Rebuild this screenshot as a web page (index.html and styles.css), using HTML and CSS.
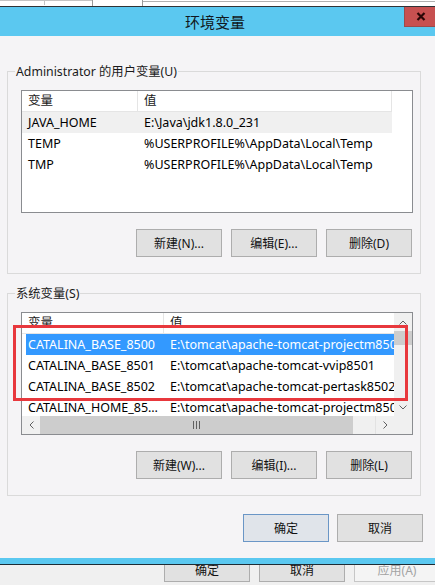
FILE: index.html
```html
<!DOCTYPE html>
<html lang="zh-CN">
<head>
<meta charset="utf-8">
<title>环境变量</title>
<link rel="stylesheet" href="styles.css">
</head>
<body>
<div class="top-strip">
  <div class="ts-a"><span class="ts-tick"></span></div>
  <div class="ts-tab"></div>
  <div class="ts-b"></div>
</div>
<div class="dialog">
  <div class="titlebar">
    <div class="title">环境变量</div>
    <div class="close">
      <svg width="10" height="9" viewBox="0 0 10 9"><path d="M1.5 1 L8.5 8 M8.5 1 L1.5 8" stroke="#2a0606" stroke-width="2.2" fill="none"/></svg>
    </div>
  </div>
  <div class="content">
    <div class="group">
      <div class="group-label">Administrator 的用户变量(U)</div>
      <div class="list user">
        <div class="lv-head">
          <div class="c1">变量</div>
          <div class="c2">值</div>
        </div>
        <div class="row inactive"><div class="c1">JAVA_HOME</div><div class="c2">E:\Java\jdk1.8.0_231</div></div>
        <div class="row"><div class="c1">TEMP</div><div class="c2">%USERPROFILE%\AppData\Local\Temp</div></div>
        <div class="row"><div class="c1">TMP</div><div class="c2">%USERPROFILE%\AppData\Local\Temp</div></div>
      </div>
      <div class="btns">
        <button class="btn">新建(N)...</button>
        <button class="btn">编辑(E)...</button>
        <button class="btn">删除(D)</button>
      </div>
    </div>
    <div class="group">
      <div class="group-label">系统变量(S)</div>
      <div class="list sys">
        <div class="sys-body">
          <div class="lv-head">
            <div class="c1">变量</div>
            <div class="c2">值</div>
          </div>
          <div class="row sel"><div class="c1">CATALINA_BASE_8500</div><div class="c2">E:\tomcat\apache-tomcat-projectm8500</div></div>
          <div class="row"><div class="c1">CATALINA_BASE_8501</div><div class="c2">E:\tomcat\apache-tomcat-vvip8501</div></div>
          <div class="row"><div class="c1">CATALINA_BASE_8502</div><div class="c2">E:\tomcat\apache-tomcat-pertask8502</div></div>
          <div class="row"><div class="c1">CATALINA_HOME_8500</div><div class="c2">E:\tomcat\apache-tomcat-projectm8500</div></div>
        </div>
        <div class="vscroll">
          <div class="arrow"><svg width="8" height="5" viewBox="0 0 8 5"><path d="M0.5 4.5 L4 1 L7.5 4.5" stroke="#606060" fill="none"/></svg></div>
          <div class="vthumb"></div>
          <div class="track"></div>
          <div class="arrow"><svg width="8" height="5" viewBox="0 0 8 5"><path d="M0.5 0.5 L4 4 L7.5 0.5" stroke="#606060" fill="none"/></svg></div>
        </div>
        <div class="hscroll">
          <div class="harrow"><svg width="5" height="8" viewBox="0 0 5 8"><path d="M4.5 0.5 L1 4 L4.5 7.5" stroke="#606060" fill="none"/></svg></div>
          <div class="hthumb"><svg width="7" height="8" viewBox="0 0 7 8"><path d="M0.5 0 V8 M3.5 0 V8 M6.5 0 V8" stroke="#606060" fill="none"/></svg></div>
          <div class="htrack"></div>
          <div class="harrow"><svg width="5" height="8" viewBox="0 0 5 8"><path d="M0.5 0.5 L4 4 L0.5 7.5" stroke="#606060" fill="none"/></svg></div>
        </div>
        <div class="corner"></div>
        <div class="highlight"></div>
      </div>
      <div class="btns">
        <button class="btn">新建(W)...</button>
        <button class="btn">编辑(I)...</button>
        <button class="btn">删除(L)</button>
      </div>
    </div>
    <div class="dlg-btns">
      <button class="btn default">确定</button>
      <button class="btn">取消</button>
    </div>
  </div>
  <div class="frame-bottom"></div>
</div>
<div class="behind-bottom">
  <button class="btn behind">确定</button>
  <button class="btn behind">取消</button>
  <button class="btn behind disabled">应用(A)</button>
</div>
</body>
</html>
```

FILE: styles.css
```css
html, body {
  margin: 0;
  padding: 0;
}
body {
  width: 435px;
  height: 585px;
  overflow: hidden;
  background: #f0f0f0;
  font-family: "Noto Sans", "Noto Sans CJK SC", sans-serif;
  font-size: 12px;
  color: #000;
}

/* window behind, top */
.top-strip {
  height: 6px;
  background: #fff;
  border-bottom: 1px solid #2f3336;
  display: flex;
}
.ts-a {
  flex: 0 0 92px;
  border-top: 1px solid #c4c4c4;
}
.ts-tick {
  display: block;
  width: 1px;
  height: 4px;
  margin-left: 44px;
  background: #c4c4c4;
}
.ts-tab {
  flex: 0 0 49px;
  border-left: 1px solid #9a9a9a;
  border-right: 1px solid #9a9a9a;
}
.ts-b {
  flex: 1;
  margin-top: 1px;
  border-top: 1px solid #b0b0b0;
}

/* title bar */
.titlebar {
  height: 29px;
  background: #5bc8f0;
  display: flex;
  align-items: flex-start;
}
.title {
  flex: 1;
  padding-left: 26px;
  text-align: center;
  font-family: "Noto Sans CJK SC", sans-serif;
  font-size: 15px;
  line-height: 29px;
  color: #101820;
}
.close {
  width: 31px;
  height: 20px;
  box-sizing: border-box;
  background: #c75050;
  border-left: 1px solid #9c4a4a;
  border-bottom: 1px solid #9c4a4a;
  display: flex;
  align-items: center;
  padding-left: 11px;
}
.close svg {
  display: block;
}

/* content */
.content {
  background: #f5f4f6;
  padding: 35px 14px 16px 7px;
}
.group {
  border: 1px solid #dadada;
  padding: 0 7px 16px 13px;
}
.group + .group {
  margin-top: 19px;
}
.group-label {
  display: table;
  margin: -8px 0 0 -6px;
  padding: 0 1px;
  line-height: 16px;
  font-size: 12.3px;
  background: #f5f4f6;
  color: #1a1a1a;
}

.list {
  margin-top: 10px;
  height: 123px;
  box-sizing: border-box;
  border: 1px solid #8a8c90;
  background: #fff;
  position: relative;
  font-size: 12.5px;
}

.lv-head {
  display: flex;
  height: 21px;
}
.lv-head .c1,
.lv-head .c2 {
  box-sizing: border-box;
  border-right: 1px solid #e5e5e5;
  border-bottom: 1px solid #e5e5e5;
  line-height: 20px;
  color: #1a1a1a;
}
.row {
  display: flex;
  height: 21px;
  line-height: 21px;
  white-space: nowrap;
}
.c1, .c2 {
  box-sizing: border-box;
  padding-left: 6px;
  white-space: nowrap;
  overflow: hidden;
  flex: none;
}
.c1 {
  text-overflow: ellipsis;
  padding-right: 4px;
}

/* user list */
.user .c1 { width: 116px; }
.user .c2 { width: 254px; }
.user .row.inactive {
  width: 370px;
  background: #f0f0f0;
}

/* system list */
.sys {
  display: grid;
  grid-template-columns: 1fr 18px;
  grid-template-rows: 1fr 18px;
}
.sys-body {
  overflow: hidden;
}
.sys .c1 { width: 142px; }
.sys .c2 { width: 260px; }
.sys .row.sel {
  margin-left: 4px;
  background: #3399ff;
  color: #fff;
}
.sys .row.sel .c1 {
  width: 138px;
  padding-left: 2px;
}

.vscroll {
  background: #f0f0f0;
  display: flex;
  flex-direction: column;
}
.arrow {
  height: 18px;
  flex: none;
  display: flex;
  align-items: center;
  justify-content: center;
}
.arrow svg, .harrow svg, .hthumb svg {
  display: block;
}
.vthumb {
  height: 14px;
  background: #cdcdcd;
}
.track {
  flex: 1;
}
.hscroll {
  background: #f0f0f0;
  display: flex;
}
.harrow {
  width: 18px;
  flex: none;
  display: flex;
  align-items: center;
  justify-content: center;
}
.hthumb {
  width: 313px;
  flex: none;
  background: #cdcdcd;
  display: flex;
  align-items: center;
  justify-content: center;
}
.htrack {
  flex: 1;
  border-right: 1px solid #e2e2e2;
}
.corner {
  background: #f0f0f0;
}
.highlight {
  position: absolute;
  left: -9px;
  top: 12px;
  width: 395px;
  height: 76px;
  box-sizing: border-box;
  border: 3px solid #e8383d;
  pointer-events: none;
}

/* buttons */
.btns {
  display: flex;
  justify-content: flex-end;
  gap: 9px;
  margin: 16px 1px 0 0;
}
.btn {
  width: 86px;
  height: 28px;
  box-sizing: border-box;
  border: 1px solid #adadad;
  background: #e1e1e1;
  font-family: "Noto Sans", "Noto Sans CJK SC", sans-serif;
  font-size: 12px;
  color: #111;
  padding: 0;
  margin: 0;
  display: flex;
  align-items: center;
  justify-content: center;
  flex: none;
}
.btn.default {
  border-color: #6a96c6;
  background: #e0e4ea;
}
.dlg-btns {
  display: flex;
  justify-content: flex-end;
  gap: 8px;
  margin: 18px -2px 0 0;
}

.frame-bottom {
  height: 6px;
  background: #5bc8f0;
  border-bottom: 1px solid #1d2b34;
}

/* window behind, bottom */
.behind-bottom {
  height: 20px;
  overflow: hidden;
  background: #f0f0f0;
  display: flex;
  gap: 9px;
  padding-left: 164px;
}
.btn.behind {
  height: 25px;
  margin-top: -8px;
}
.btn.behind.disabled {
  background: #f4f4f4;
  border-color: #c6c6c6;
  color: #a3a3a3;
}
```
